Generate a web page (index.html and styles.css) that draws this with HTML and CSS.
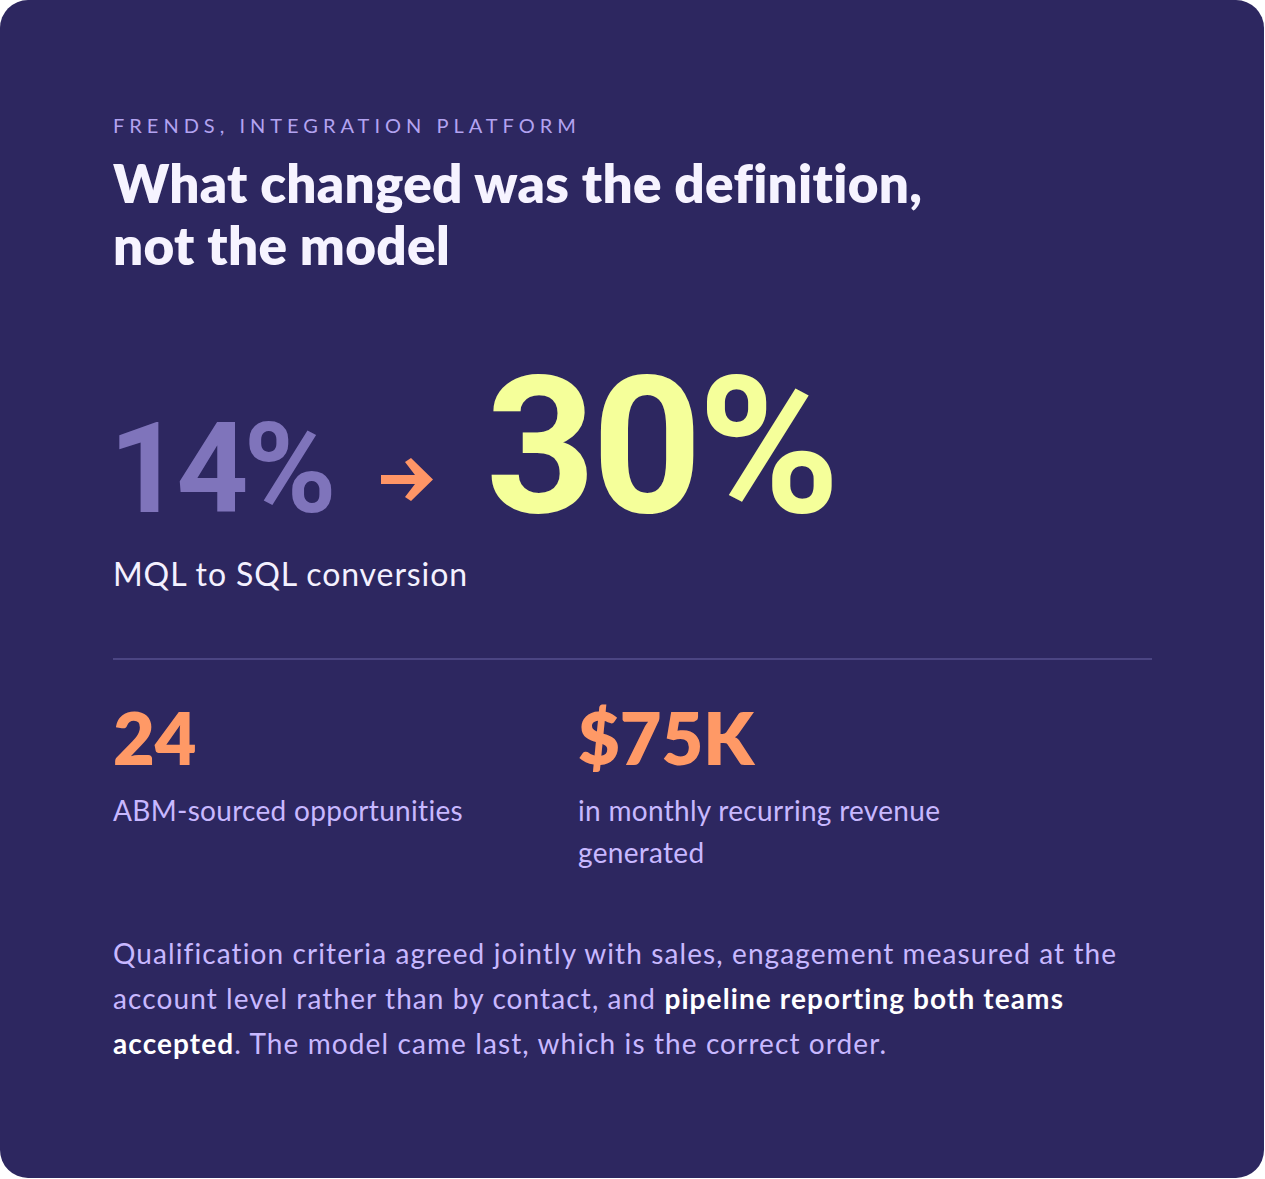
FILE: index.html
```html
<!DOCTYPE html>
<html lang="en">
<head>
<meta charset="utf-8">
<title>Frends case study</title>
<link rel="stylesheet" href="styles.css">
</head>
<body>
<section class="card">
  <p class="eyebrow">FRENDS, INTEGRATION PLATFORM</p>
  <h1 class="title">What changed was the definition,<br>not the model</h1>

  <div class="hero">
    <div class="hero-row">
      <span class="before">14%</span>
      <svg class="arrow" width="52" height="43" viewBox="0 0 52 43" aria-hidden="true">
        <path d="M0 17 H34 L24 4 L30 0 L52 21.5 L30 43 L24 39 L34 26 H0 Z" fill="#ff9566"/>
      </svg>
      <span class="after">30%</span>
    </div>
    <p class="hero-label">MQL to SQL conversion</p>
  </div>

  <hr class="divider">

  <div class="stats">
    <div class="stat">
      <div class="stat-num">24</div>
      <p class="stat-label">ABM-sourced opportunities</p>
    </div>
    <div class="stat">
      <div class="stat-num">$75K</div>
      <p class="stat-label">in monthly recurring revenue generated</p>
    </div>
  </div>

  <p class="summary">Qualification criteria agreed jointly with sales, engagement measured at the account level rather than by contact, and <strong>pipeline reporting both teams accepted</strong>. The model came last, which is the correct order.</p>
</section>
</body>
</html>
```

FILE: styles.css
```css
html, body {
  margin: 0;
  padding: 0;
  background: #ffffff;
}

body {
  font-family: "Lato", "Noto Sans", sans-serif;
}

.card {
  box-sizing: border-box;
  width: 1264px;
  height: 1178px;
  background: #2d2760;
  border-radius: 28px;
  padding: 112px 112px 0 113px;
  color: #f4f1ff;
}

.eyebrow {
  margin: 0;
  font-size: 20px;
  line-height: 26px;
  letter-spacing: 5px;
  color: #b3a3f0;
  font-weight: 400;
}

.title {
  margin: 14px 0 0;
  font-size: 53px;
  line-height: 62px;
  font-weight: 800;
  color: #f6f3ff;
  letter-spacing: 0.3px;
}

.hero {
  margin-top: 75px;
}

.hero-row {
  display: flex;
  align-items: baseline;
}

.before,
.after {
  font-family: "Roboto", "Lato", sans-serif;
  font-weight: 700;
  line-height: 1;
}

.before {
  margin-left: -4px;
  font-size: 126px;
  color: #7f74bb;
  letter-spacing: -5px;
}

.arrow {
  flex: none;
  margin: 0 53px 0 49px;
  transform: translateY(-11px);
}

.after {
  font-size: 192px;
  color: #f5ff9a;
  letter-spacing: -4px;
}

.hero-label {
  margin: 11px 0 0;
  font-size: 32px;
  line-height: 40px;
  letter-spacing: 0.9px;
  color: #f4f1ff;
}

.divider {
  margin: 64px 0 0;
  border: 0;
  height: 2px;
  background: #4b4583;
}

.stats {
  display: grid;
  grid-template-columns: 465px 1fr;
  margin-top: 41px;
}

.stat-num {
  font-size: 72px;
  line-height: 1;
  font-weight: 800;
  color: #ff9966;
}

.stat-label {
  margin: 16px 0 0;
  max-width: 390px;
  font-size: 28px;
  line-height: 42px;
  letter-spacing: 0.3px;
  color: #c8b8ff;
}

.summary {
  margin: 58px 0 0;
  font-size: 28px;
  line-height: 45px;
  letter-spacing: 1.1px;
  color: #c8b8ff;
}

.summary strong {
  color: #ffffff;
  font-weight: 700;
}
```
